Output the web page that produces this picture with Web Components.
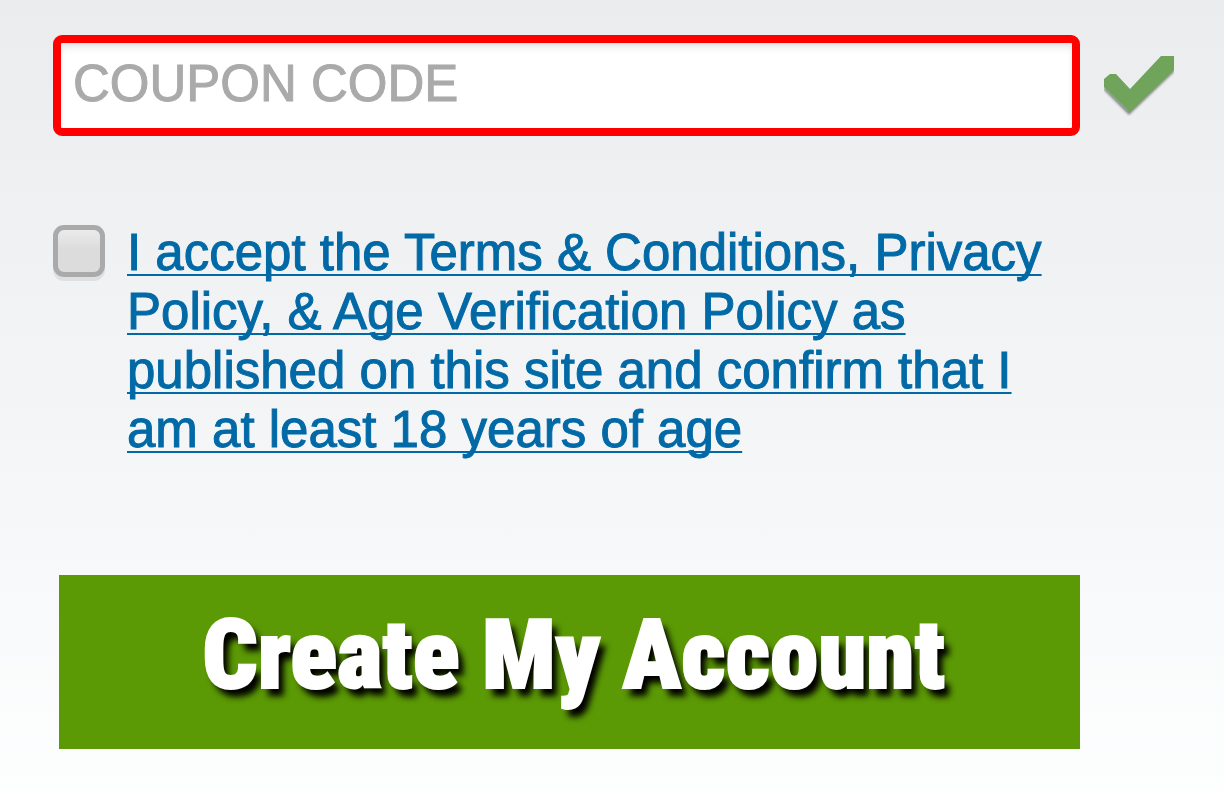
<!DOCTYPE html>
<html lang="en">
<head>
<meta charset="utf-8">
<meta name="viewport" content="width=device-width, initial-scale=1">
<title>Create My Account</title>
<style>
html { min-height: 100%; background: linear-gradient(#eaecee, #f4f5f7 54%, #fdfefe); }
body { margin: 0; font-family: "Liberation Sans", Arial, sans-serif; }
</style>
</head>
<body>
<signup-form>
  <coupon-field></coupon-field>
  <valid-mark slot="status"></valid-mark>
  <terms-check>I accept the Terms &amp; Conditions, Privacy Policy, &amp; Age Verification Policy as published on this site and confirm that I am at least 18 years of age</terms-check>
  <submit-button>Create My Account</submit-button>
</signup-form>
<script>
const define = (name, html) => customElements.define(name, class extends HTMLElement {
  constructor() {
    super();
    this.attachShadow({ mode: "open" }).innerHTML = html;
  }
});

define("signup-form", `
<style>
:host { display: block; }
form { display: grid; grid-template-columns: minmax(0, 1fr) 70px; column-gap: 24px; padding: 35px 50px 43px 53px; }
::slotted(*) { grid-column: 1; }
::slotted([slot=status]) { grid-column: 2; grid-row: 1; align-self: center; }
</style>
<form><slot name="status"></slot><slot></slot></form>`);

define("coupon-field", `
<style>
:host { display: block; grid-row: 1; }
input {
  display: block; box-sizing: border-box; width: 100%; height: 101px; margin: 0;
  padding: 0 12px 4px; border: 8px solid #f00; border-radius: 9px; background: #fff;
  box-shadow: inset 0 6px 8px -3px #ddd; color: #444;
  font: 51px "Liberation Sans", Arial, sans-serif;
}
input::placeholder { color: #aaa; opacity: 1; -webkit-text-stroke: 1px #aaa; }
</style>
<input type="text" aria-label="Coupon code" placeholder="COUPON CODE">`);

define("valid-mark", `
<style>
:host { display: block; }
svg { display: block; width: 70px; height: 60px; }
</style>
<svg viewBox="0 0 70 60" role="img" aria-label="Valid">
  <defs><filter id="soft"><feGaussianBlur stdDeviation="1"/></filter></defs>
  <path d="M0 34 25 59 70 16V12L25 54 0 30Z" fill="#858a85" filter="url(#soft)"/>
  <path d="M0 23 6 18H12L26 33 57 0H70V14L26 56 0 31Z" fill="#70a45b"/>
</svg>`);

define("terms-check", `
<style>
:host { display: flex; align-items: flex-start; gap: 22px; margin-top: 87px; }
input {
  appearance: none; flex: none; box-sizing: border-box; width: 52px; height: 52px; margin: 2px 0 0;
  border: 5px solid #aaa; border-radius: 11px; background: linear-gradient(#ebebeb, #dcdcdc 45%);
  box-shadow: 0 4px 0 #dfe0e1;
}
input:checked { background: #0069a6; }
a {
  color: #0069a6; font-size: 51px; line-height: 59px; -webkit-text-stroke: 1px #0069a6;
  text-decoration: underline 2px; text-underline-offset: 4px; text-decoration-skip-ink: none;
}
</style>
<input type="checkbox" id="accept" aria-labelledby="terms">
<a id="terms" href="#terms"><slot></slot></a>`);

define("submit-button", `
<style>
:host { display: block; margin: 116px 0 0 6px; }
button {
  display: block; width: 100%; padding: 20px 0 34px 8px; border: 0; background: #5b9905; color: #fff;
  font: 900 97px/120px "Roboto Condensed", "Arial Narrow", Roboto, sans-serif;
  -webkit-text-stroke: 2px #fff; text-shadow: 6px 8px 6px #000; cursor: pointer;
}
</style>
<button type="submit"><slot></slot></button>`);
</script>
</body>
</html>
